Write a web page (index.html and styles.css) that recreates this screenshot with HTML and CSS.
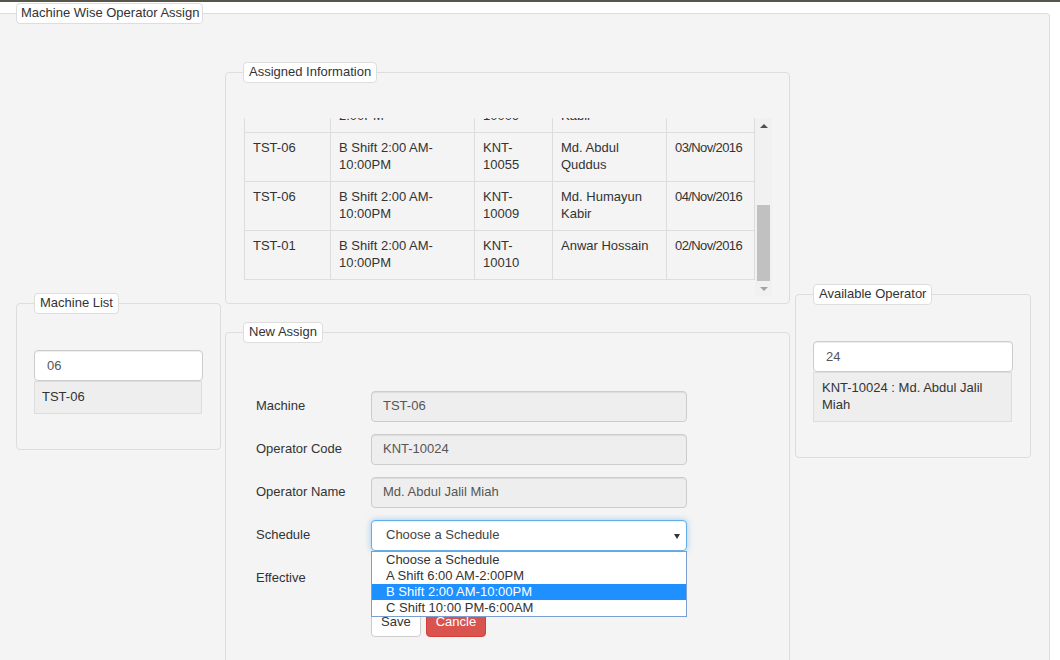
FILE: index.html
```html
<!DOCTYPE html>
<html lang="en">
<head>
<meta charset="utf-8">
<title>Machine Wise Operator Assign</title>
<link rel="stylesheet" href="styles.css">
</head>
<body>
<div class="topline"></div>
<fieldset class="panel outer">
  <legend>Machine Wise Operator Assign</legend>
  <div class="layout">
    <div class="col-left">
      <fieldset class="panel side">
        <legend>Machine List</legend>
        <input class="search" type="text" value="06">
        <div class="result">TST-06</div>
      </fieldset>
    </div>

    <div class="col-mid">
      <fieldset class="panel assigned">
        <legend>Assigned Information</legend>
        <div class="grid-wrap">
          <div class="viewport">
            <div class="scroll-content">
              <table class="data">
                <colgroup>
                  <col class="c1"><col class="c2"><col class="c3"><col class="c4"><col class="c5">
                </colgroup>
                <thead>
                  <tr><th>Machine</th><th>Schedule</th><th>Operator Code</th><th>Operator Name</th><th>Effective</th></tr>
                </thead>
                <tbody>
                  <tr><td>TST-02</td><td>A Shift 6:00 AM-2:00PM</td><td>KNT-10012</td><td>Md. Rafiqul Islam</td><td>01/Nov/2016</td></tr>
                  <tr><td>TST-04</td><td>C Shift 10:00 PM-6:00AM</td><td>KNT-10021</td><td>Md. Shahidul Alam</td><td>01/Nov/2016</td></tr>
                  <tr><td>TST-05</td><td>A Shift 6:00 AM-2:00PM</td><td>KNT-10009</td><td>Md. Humayun Kabir</td><td>02/Nov/2016</td></tr>
                  <tr><td>TST-06</td><td>B Shift 2:00 AM-10:00PM</td><td>KNT-10055</td><td>Md. Abdul Quddus</td><td>03/Nov/2016</td></tr>
                  <tr><td>TST-06</td><td>B Shift 2:00 AM-10:00PM</td><td>KNT-10009</td><td>Md. Humayun Kabir</td><td>04/Nov/2016</td></tr>
                  <tr><td>TST-01</td><td>B Shift 2:00 AM-10:00PM</td><td>KNT-10010</td><td>Anwar Hossain</td><td>02/Nov/2016</td></tr>
                </tbody>
              </table>
            </div>
          </div>
          <div class="vscroll" aria-hidden="true">
            <div class="sb-btn"><span class="tri-up"></span></div>
            <div class="sb-track"><div class="sb-thumb"></div></div>
            <div class="sb-btn"><span class="tri-down"></span></div>
          </div>
        </div>
      </fieldset>

      <fieldset class="panel newassign">
        <legend>New Assign</legend>
        <form class="form">
          <div class="row">
            <label>Machine</label>
            <input class="ctl readonly" type="text" value="TST-06" readonly>
          </div>
          <div class="row">
            <label>Operator Code</label>
            <input class="ctl readonly" type="text" value="KNT-10024" readonly>
          </div>
          <div class="row">
            <label>Operator Name</label>
            <input class="ctl readonly" type="text" value="Md. Abdul Jalil Miah" readonly>
          </div>
          <div class="row">
            <label>Schedule</label>
            <div class="select-wrap">
              <div class="select">Choose a Schedule<span class="caret"></span></div>
              <ul class="options">
                <li>Choose a Schedule</li>
                <li>A Shift 6:00 AM-2:00PM</li>
                <li class="active">B Shift 2:00 AM-10:00PM</li>
                <li>C Shift 10:00 PM-6:00AM</li>
              </ul>
            </div>
          </div>
          <div class="row">
            <label>Effective</label>
            <input class="ctl" type="text" value="">
          </div>
          <div class="actions">
            <button type="button" class="btn btn-default">Save</button>
            <button type="button" class="btn btn-danger">Cancle</button>
          </div>
        </form>
      </fieldset>
    </div>

    <div class="col-right">
      <fieldset class="panel side">
        <legend>Available Operator</legend>
        <input class="search" type="text" value="24">
        <div class="result">KNT-10024 : Md. Abdul Jalil Miah</div>
      </fieldset>
    </div>
  </div>
</fieldset>
</body>
</html>
```

FILE: styles.css
```css
* {
  box-sizing: border-box;
}

body {
  margin: 0;
  background: #ffffff;
  font-family: "Liberation Sans", Arial, sans-serif;
  font-size: 13px;
  color: #333333;
}

.topline {
  height: 2px;
  background: #56564a;
}

.panel {
  margin: 0;
  min-width: 0;
  padding: 0 17px;
  border: 1px solid #dddddd;
  border-radius: 4px;
  background: #f4f4f4;
}

.panel > legend {
  margin: 0;
  padding: 0 5px 1px;
  background: #ffffff;
  border: 1px solid #dddddd;
  border-radius: 4px;
  font-size: 13px;
  line-height: 18px;
  color: #333333;
}

.outer {
  margin-top: 1px;
  width: 1050px;
  border-left: 0;
  border-radius: 0 4px 4px 0;
  padding: 0 0 30px 16px;
}

.outer > legend {
  padding: 0 3px 1px 4px;
}

.layout {
  display: flex;
  align-items: flex-start;
  padding-top: 38px;
}

.col-left {
  width: 205px;
  margin-top: 231px;
}

.col-mid {
  width: 565px;
  margin-left: 4px;
}

.col-right {
  width: 236px;
  margin-left: 5px;
  margin-top: 222px;
}

/* side panels */
.side {
  padding: 36px 17px 35px;
}

.search {
  display: block;
  width: 100%;
  height: 31px;
  margin: 0;
  padding: 0 12px 1px;
  border: 1px solid #cccccc;
  border-radius: 4px;
  background: #ffffff;
  font: 13px "Liberation Sans", Arial, sans-serif;
  color: #555555;
  box-shadow: inset 0 1px 1px rgba(0, 0, 0, 0.075);
}

.result {
  width: calc(100% - 1px);
  padding: 6px 8px 8px;
  line-height: 17px;
  background: #eeeeee;
  border: 1px solid #dddddd;
  color: #333333;
}

.col-left .result {
  padding: 6px 7px 8px;
}

/* assigned information */
.assigned {
  padding: 35px 17px 7px;
}

.grid-wrap {
  display: flex;
  margin-left: 1px;
  height: 178px;
}

.viewport {
  width: 511px;
  height: 178px;
  overflow: hidden;
  display: flex;
  flex-direction: column;
  justify-content: flex-end;
}

.scroll-content {
  flex-shrink: 0;
  padding-bottom: 16px;
}

.data {
  width: 510px;
  table-layout: fixed;
  border-collapse: collapse;
  border: 1px solid #dddddd;
}

.data .c1 { width: 86px; }
.data .c2 { width: 144px; }
.data .c3 { width: 78px; }
.data .c4 { width: 114px; }
.data .c5 { width: 88px; }

.data th,
.data td {
  padding: 6px 8px 8px;
  border: 1px solid #dddddd;
  line-height: 17px;
  text-align: left;
  vertical-align: top;
  font-size: 13px;
  color: #333333;
}

.data td:nth-child(5) {
  letter-spacing: -0.6px;
  white-space: nowrap;
}

.vscroll {
  width: 17px;
  display: flex;
  flex-direction: column;
  background: #f1f1f1;
}

.sb-btn {
  height: 15px;
  display: flex;
  align-items: center;
  justify-content: center;
}

.tri-up {
  width: 0;
  height: 0;
  border-left: 4px solid transparent;
  border-right: 4px solid transparent;
  border-bottom: 4px solid #505050;
}

.tri-down {
  width: 0;
  height: 0;
  border-left: 4px solid transparent;
  border-right: 4px solid transparent;
  border-top: 4px solid #a3a3a3;
}

.sb-track {
  flex: 1;
  display: flex;
  flex-direction: column;
  justify-content: flex-end;
}

.sb-thumb {
  height: 76px;
  margin: 0 2px;
  background: #c1c1c1;
}

/* new assign */
.newassign {
  margin-top: 18px;
  padding: 48px 17px 60px;
}

.form {
  padding-left: 13px;
}

.row {
  display: flex;
  align-items: center;
  height: 31px;
  margin-bottom: 12px;
}

.row > label {
  width: 115px;
  flex-shrink: 0;
  padding-bottom: 2px;
  color: #333333;
}

.ctl {
  width: 316px;
  height: 31px;
  margin: 0;
  padding: 0 11px 2px;
  border: 1px solid #cccccc;
  border-radius: 4px;
  background: #ffffff;
  font: 13px "Liberation Sans", Arial, sans-serif;
  color: #555555;
  box-shadow: inset 0 1px 1px rgba(0, 0, 0, 0.075);
}

.ctl.readonly {
  background: #eeeeee;
}

.select-wrap {
  position: relative;
  width: 316px;
  height: 31px;
}

.select {
  height: 31px;
  padding-left: 14px;
  line-height: 28px;
  border: 1px solid #66afe9;
  border-radius: 4px;
  background: #ffffff;
  color: #444444;
  box-shadow: inset 0 1px 1px rgba(0, 0, 0, 0.075), 0 0 6px rgba(102, 175, 233, 0.6);
  position: relative;
}

.caret {
  position: absolute;
  right: 6px;
  top: 13px;
  width: 0;
  height: 0;
  border-left: 3px solid transparent;
  border-right: 3px solid transparent;
  border-top: 5px solid #333333;
}

.options {
  position: absolute;
  top: 100%;
  left: 0;
  z-index: 5;
  width: 316px;
  margin: 0;
  padding: 0;
  list-style: none;
  background: #ffffff;
  border: 1px solid #7b9fd0;
}

.options li {
  height: 16px;
  line-height: 15px;
  padding-left: 14px;
  color: #333333;
  white-space: nowrap;
}

.options li.active {
  background: #1e90ff;
  color: #ffffff;
}

.actions {
  display: flex;
  gap: 5px;
  margin-left: 115px;
  margin-top: 13px;
}

.btn {
  height: 30px;
  margin: 0;
  padding: 0 9px 2px;
  border-radius: 4px;
  font: 13px "Liberation Sans", Arial, sans-serif;
  cursor: pointer;
}

.btn-default {
  background: #ffffff;
  border: 1px solid #cccccc;
  color: #333333;
}

.btn-danger {
  background: #d9534f;
  border: 1px solid #d43f3a;
  color: #ffffff;
}
```
